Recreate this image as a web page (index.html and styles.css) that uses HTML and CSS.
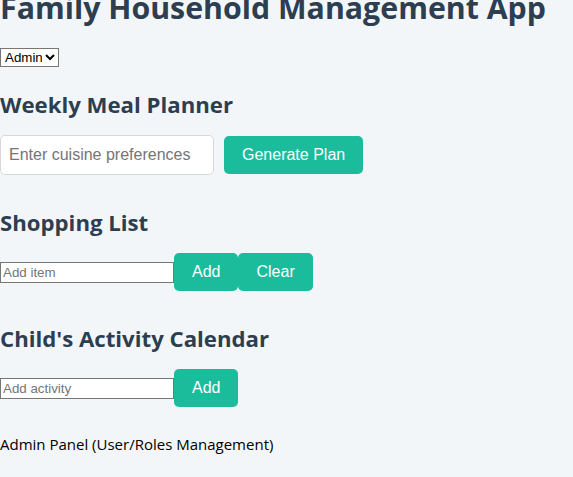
FILE: index.html
```html
<!DOCTYPE html>
<html lang="en">
<head>
<meta charset="utf-8">
<title>Family Household Management App</title>
<link rel="stylesheet" href="styles.css">
</head>
<body>
<h1 class="title">Family Household Management App</h1>
<select class="role"><option>Admin</option><option>Parent</option><option>Child</option></select>

<section class="section">
  <h2 class="heading">Weekly Meal Planner</h2>
  <div class="row gap">
    <input class="field" type="text" placeholder="Enter cuisine preferences">
    <button class="btn">Generate Plan</button>
  </div>
</section>

<section class="section">
  <h2 class="heading">Shopping List</h2>
  <div class="row">
    <input class="plain" type="text" placeholder="Add item">
    <button class="btn">Add</button>
    <button class="btn">Clear</button>
  </div>
</section>

<section class="section">
  <h2 class="heading">Child's Activity Calendar</h2>
  <div class="row">
    <input class="plain" type="text" placeholder="Add activity">
    <button class="btn">Add</button>
  </div>
</section>

<div class="admin">Admin Panel (User/Roles Management)</div>
</body>
</html>
```

FILE: styles.css
```css
html, body {
  margin: 0;
  padding: 0;
  background: #f3f6f9;
}
body {
  font-family: "Open Sans", "Noto Sans", sans-serif;
  color: #000;
  overflow: hidden;
}
.title {
  font-size: 30.3px;
  font-weight: 700;
  color: #2c3e50;
  margin: -13px 0 0 0;
  line-height: 42px;
  white-space: nowrap;
}
.role {
  display: block;
  font-family: "Liberation Sans", Arial, sans-serif;
  font-size: 13.33px;
  margin-top: 19px;
  width: 59px;
  height: 19px;
  padding: 0;
  border: 1px solid #767676;
  border-radius: 0;
  background: #fff;
  color: #000;
}
.section {
  margin-top: 23px;
}
.section + .section {
  margin-top: 33px;
}
.heading {
  font-size: 22.2px;
  font-weight: 700;
  color: #2c3e50;
  margin: 0 0 15px 0;
  line-height: 30px;
}
.row {
  display: flex;
  align-items: center;
}
.gap {
  gap: 10px;
}
.field {
  font-family: "Liberation Sans", Arial, sans-serif;
  font-size: 16px;
  width: 214px;
  height: 40px;
  box-sizing: border-box;
  padding: 10px 8px;
  border: 1px solid #d5d9de;
  border-radius: 5px;
  background: #fff;
  color: #333;
}
.field::placeholder { color: #757575; }
.plain {
  font-family: "Liberation Sans", Arial, sans-serif;
  font-size: 13.33px;
  width: 174px;
  height: 21px;
  box-sizing: border-box;
  padding: 1px 2px;
  border: 1px solid #767676;
  border-radius: 0;
  background: #fff;
}
.plain::placeholder { color: #757575; }
.btn {
  font-family: "Liberation Sans", Arial, sans-serif;
  font-size: 16px;
  color: #fff;
  background: #1abc9c;
  border: none;
  border-radius: 5px;
  height: 38px;
  padding: 0 18px;
}
.admin {
  margin-top: 27px;
  font-size: 15px;
  line-height: 20px;
  color: #000;
}
```
